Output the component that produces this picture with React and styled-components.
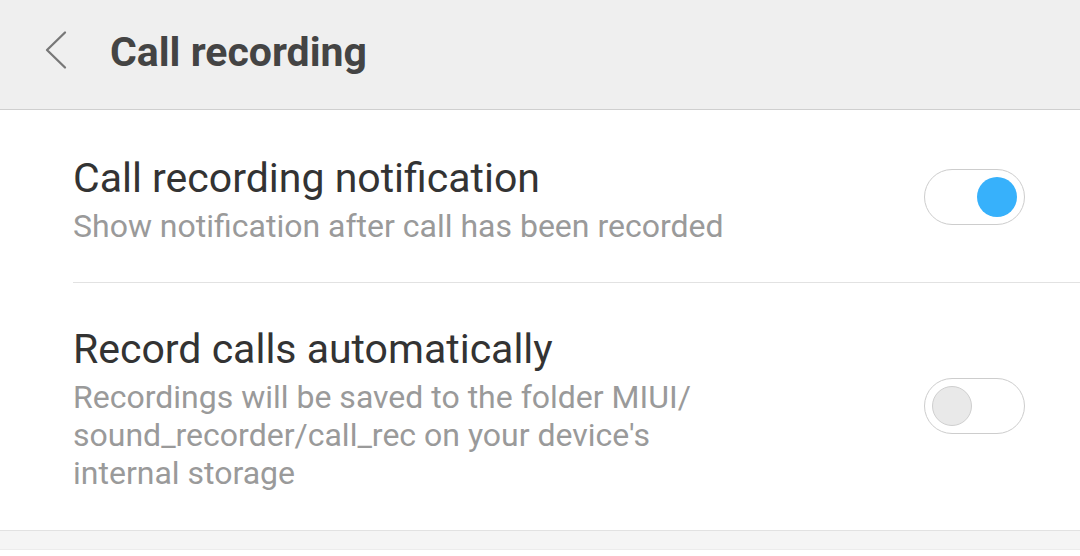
import React from 'react'
import styled, { createGlobalStyle } from 'styled-components'

const Global = createGlobalStyle`
    body {
        margin: 0;
        background: #fff;
        font-family: Roboto, "Noto Sans", sans-serif;
    }
`

const Page = styled.div`
    width: 1080px;
    height: 556px;
    overflow: hidden;
    background: #fff;
`

const Header = styled.header`
    height: 109px;
    background: #efefef;
    border-bottom: 1px solid #cfcfcf;
    display: flex;
    align-items: center;
`

const Back = styled.button`
    background: none;
    border: none;
    padding: 0;
    margin: -10px 0 0 44px;
    width: 24px;
    height: 40px;
    display: flex;
    align-items: center;
    justify-content: center;
`

const Title = styled.h1`
    margin: -6px 0 0 42px;
    font-size: 41px;
    font-weight: 700;
    color: #444;
`

const Row = styled.div`
    margin-left: 73px;
    padding: ${p => p.pad};
    display: flex;
    align-items: center;
    border-bottom: ${p => p.last ? 'none' : '1px solid #e2e2e2'};
`

const Text = styled.div`
    flex: 1;
`

const Label = styled.div`
    font-size: 41px;
    color: #333;
    line-height: 48px;
`

const Sub = styled.div`
    font-size: 32px;
    color: #9a9a9a;
    line-height: 38px;
    margin-top: 5px;
`

const Track = styled.div`
    width: 101px;
    height: 56px;
    box-sizing: border-box;
    border: 1px solid #cdcdcd;
    border-radius: 28px;
    margin: 0 55px 6px 0;
    display: flex;
    align-items: center;
    justify-content: ${p => p.on ? 'flex-end' : 'flex-start'};
    padding: 0 7px;
    background: #fff;
`

const Knob = styled.div`
    width: 40px;
    height: 40px;
    border-radius: 50%;
    box-sizing: border-box;
    background: ${p => p.on ? '#37b1fb' : '#e9e9e9'};
    border: ${p => p.on ? 'none' : '1px solid #cfcfcf'};
`

const Band = styled.div`
    height: 18px;
    background: #f5f5f5;
    border-top: 1px solid #e2e2e2;
    border-bottom: 1px solid #ececec;
`

const Toggle = ({ on }) => (
    <Track on={on}>
        <Knob on={on} />
    </Track>
)

const App = () => {
    return (
        <Page>
            <Global />
            <Header>
                <Back>
                    <svg width="24" height="40" viewBox="0 0 24 40">
                        <path d="M21 2.5 L3 20 L21 37.5" fill="none" stroke="#777" strokeWidth="2.3" strokeLinecap="round" strokeLinejoin="round" />
                    </svg>
                </Back>
                <Title>Call recording</Title>
            </Header>
            <Row pad="44px 0 37px 0">
                <Text>
                    <Label>Call recording notification</Label>
                    <Sub>Show notification after call has been recorded</Sub>
                </Text>
                <Toggle on />
            </Row>
            <Row pad="42px 0 38px 0" last>
                <Text>
                    <Label>Record calls automatically</Label>
                    <Sub>
                        Recordings will be saved to the folder MIUI/<br />
                        sound_recorder/call_rec on your device's<br />
                        internal storage
                    </Sub>
                </Text>
                <Toggle />
            </Row>
            <Band />
        </Page>
    )
}

export default App
